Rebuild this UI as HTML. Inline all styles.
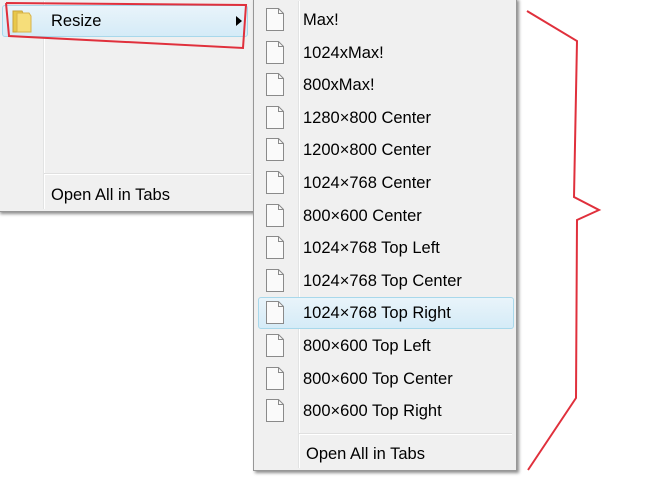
<!DOCTYPE html>
<html><head><style>
body{margin:0;width:650px;height:490px;background:#fff;position:relative;overflow:hidden;font-family:"Liberation Sans",sans-serif;font-size:16.5px;color:#000}
.menu{position:absolute;background:#f0f0f0;border:1px solid #979797;box-shadow:2px 2px 3px rgba(0,0,0,.45)}
.gut{position:absolute;top:2px;bottom:2px;width:1px;background:#e2e3e3;border-right:1px solid #fff}
.t{position:absolute;white-space:nowrap}
.hl{position:absolute;border:1px solid #a8d8eb;border-radius:3px;background:linear-gradient(#e9f4fa,#d5ebf7)}
.sep{position:absolute;height:1px;background:#e0e0e0;border-bottom:1px solid #fff}
</style></head><body>
<div class="menu" style="left:-2px;top:-2px;width:254px;height:212px">
  <div class="gut" style="left:44px"></div>
  <div class="hl" style="left:3px;top:6px;width:244px;height:30px"></div>
  <svg style="position:absolute;left:12px;top:10px" width="24" height="26"><path d="M2 2h9l1 2v19H2z" fill="#e8c84a" stroke="#c9a23a"/><path d="M6 4h12l2 3v16H6z" fill="#f6de7a" stroke="#d8b34a"/></svg>
  <div class="t" style="left:52px;top:13px">Resize</div>
  <svg style="position:absolute;left:237px;top:17px" width="6" height="10"><path d="M0 0L6 5L0 10z" fill="#000"/></svg>
  <div class="sep" style="left:45px;right:2px;top:174px"></div>
  <div class="t" style="left:52px;top:187px">Open All in Tabs</div>
</div>
<div class="menu" style="left:253px;top:-2px;width:262px;height:471px">
  <div class="gut" style="left:44px"></div>
  <div class="hl" style="left:4px;top:298px;width:254px;height:30px"></div>
  <div class="sep" style="left:45px;right:4px;top:434px"></div>
  <div class="t" style="left:52px;top:446px">Open All in Tabs</div>
</div>
<svg style="position:absolute;left:0;top:0" width="650" height="490">
  <g id="icons"></g>
  <polyline points="6,3 246,5 243,48 9,36 6,3" fill="none" stroke="#e0303c" stroke-width="2"/>
  <polyline points="527,11 577,41 574,197 599,210 577,220 576,398 528,470" fill="none" stroke="#e0303c" stroke-width="2"/>
</svg>
<div style="position:absolute;left:0;top:0">
<script>
var L=["Max!","1024xMax!","800xMax!","1280×800 Center","1200×800 Center","1024×768 Center","800×600 Center","1024×768 Top Left","1024×768 Top Center","1024×768 Top Right","800×600 Top Left","800×600 Top Center","800×600 Top Right"];
var h="",s="";
for(var i=0;i<L.length;i++){var y=Math.round(19+i*32.6);
h+='<div class="t" style="left:303px;top:'+(y-8)+'px">'+L[i]+'</div>';
s+='<path d="M266.5 '+(y-10.5)+'h12l5 5v17h-17z" fill="#fafafa" stroke="#8a8a8a"/><path d="M278.5 '+(y-10.5)+'v5h5" fill="none" stroke="#8a8a8a"/>';}
document.write(h);document.getElementById("icons").innerHTML=s;
</script>
</div>
</body></html>
